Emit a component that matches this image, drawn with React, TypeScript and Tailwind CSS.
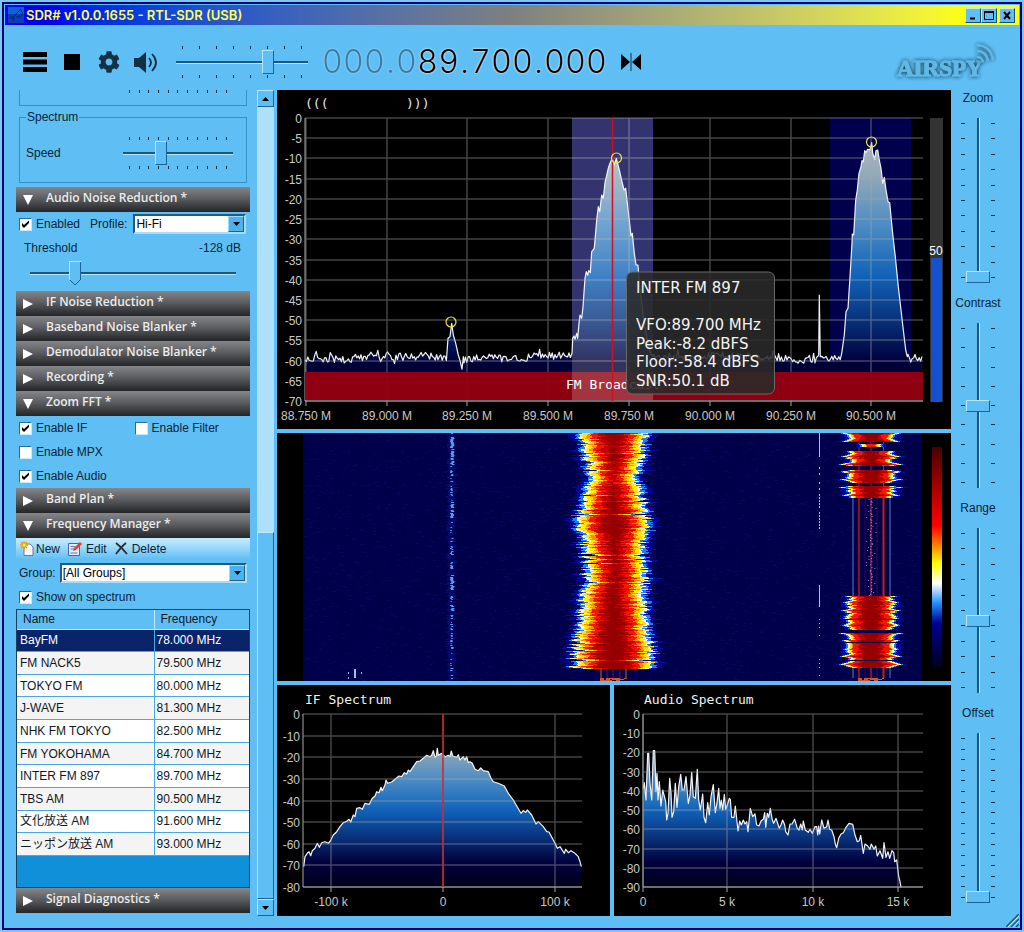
import { type ReactNode } from 'react';
import { FaCog } from 'react-icons/fa';

type Point = [number, number];

const stations = [
  { name: 'BayFM', frequency: '78.000 MHz' },
  { name: 'FM NACK5', frequency: '79.500 MHz' },
  { name: 'TOKYO FM', frequency: '80.000 MHz' },
  { name: 'J-WAVE', frequency: '81.300 MHz' },
  { name: 'NHK FM TOKYO', frequency: '82.500 MHz' },
  { name: 'FM YOKOHAMA', frequency: '84.700 MHz' },
  { name: 'INTER FM 897', frequency: '89.700 MHz' },
  { name: 'TBS AM', frequency: '90.500 MHz' },
  { name: '文化放送 AM', frequency: '91.600 MHz' },
  { name: 'ニッポン放送 AM', frequency: '93.000 MHz' },
];

// Small seeded generator so the noise is the same on every render
function createRandom(seed: number) {
  let s = seed;
  return () => {
    s = (s * 1664525 + 1013904223) % 4294967296;
    return s / 4294967296;
  };
}

// Traces are stored in thirds of a pixel
function parseTrace(data: string, dx = 0, dy = 0): Point[] {
  return data.split(' ').map(pair => {
    const [x, y] = pair.split(',').map(Number);
    return [(x + dx) / 3, (y + dy) / 3];
  });
}

function toPath(points: Point[]) {
  return 'M' + points.map(([x, y]) => `${x.toFixed(1)} ${y.toFixed(1)}`).join('L');
}

/* ---------- trace data ---------- */

const random = createRandom(897);

function noise(from: number, to: number): Point[] {
  const points: Point[] = [];
  for (let x = from; x < to; x += 1.4) {
    const drift = Math.sin(x / 26) * 1.4 + Math.sin(x / 9) * 0.8;
    const spike = random() > 0.88 ? (random() - 0.5) * 12 : 0;
    points.push([x, 267.5 + drift + (random() - 0.5) * 8 + spike]);
  }
  return points;
}

const mainTrace: Point[] = [
  ...noise(28, 170),
  ...parseTrace('519,745 525,740 530,700 535,735 542,760 550,795 556,815 561,838 565,800', -6),
  ...noise(187, 294),
  ...parseTrace(
    '891,790 893,745 897,738 900,748 905,730 908,745 912,700 915,675 920,685 924,650 930,565 934,545 938,556 941,542 946,548 950,485 958,475 965,390 970,350 974,365 980,315 985,325 990,278 1000,235 1005,220 1012,205 1018,225 1024,205',
    -6
  ),
  ...parseTrace(
    '58,240 65,272 72,300 77,295 83,350 88,390 93,437 97,430 103,490 108,525 114,525 118,575 124,630 130,680 140,740 150,785 158,800',
    969
  ),
  ...noise(377, 541),
  ...parseTrace('656,795 658,615 661,800', 969),
  ...noise(545, 564),
  ...parseTrace(
    '725,790 733,735 738,665 744,655 750,560 756,460 757,432 761,435 767,330 772,300 777,250 783,230 786,212 790,215 794,182 798,188 803,178 810,180 815,158 818,190 824,208 828,182 833,180 838,210 843,235 848,280 853,262 858,300 864,335 869,338 877,420 886,500 895,590 903,660 910,720 917,780 922,800',
    969
  ),
  ...noise(631, 646),
];

const ifTrace = parseTrace(
  '86,560 90,530 97,520 102,515 107,527 112,512 120,505 127,490 133,502 140,488 150,485 160,490 166,483 175,465 185,455 195,440 205,428 215,424 222,418 227,426 235,405 240,410 245,385 255,383 262,388 270,370 283,373 292,355 300,348 305,335 312,338 318,322 322,332 330,315 333,300 338,310 350,306 360,298 372,288 380,290 388,278 395,282 400,270 405,275 415,260 425,245 435,243 445,235 455,226 465,230 470,226 475,212 480,232 484,228 487,205 490,226 500,220 510,230 520,226 525,230 529,213 533,228 545,232 550,224 555,240 565,230 570,240 575,230 580,248 585,245 592,250 600,268 610,272 617,264 625,272 640,275 648,295 655,305 670,310 688,318 700,340 715,360 725,378 738,400 745,392 752,397 757,390 770,405 783,432 790,425 805,440 815,455 822,456 832,475 840,490 847,505 855,500 868,520 872,508 880,518 888,512 900,520 910,530 915,545 919,560',
  -6,
  -15
);

const audioTrace = parseTrace(
  '100,325 103,308 108,360 113,220 116,220 120,310 125,360 130,212 134,212 138,335 141,280 144,360 148,305 153,378 158,330 162,345 167,365 170,420 174,400 179,295 183,340 186,412 191,395 196,310 201,382 206,320 212,283 217,330 222,330 228,290 235,370 240,345 245,277 250,350 256,355 262,268 266,360 271,390 278,342 282,412 287,428 293,368 298,405 303,350 310,314 316,398 320,375 326,325 330,385 334,360 338,390 343,343 347,388 352,375 358,355 361,358 365,412 372,412 376,378 384,453 389,423 394,435 400,420 405,432 410,425 414,455 421,385 428,410 435,402 440,435 447,438 453,423 460,418 464,398 467,442 472,400 476,412 481,385 487,420 491,430 498,415 508,445 513,435 518,420 524,435 527,455 534,465 540,432 546,432 554,418 562,445 567,450 572,432 577,450 580,423 586,450 595,457 600,448 607,460 615,440 620,440 623,465 626,438 629,462 635,420 642,445 650,440 654,420 659,448 665,450 672,470 676,492 680,503 686,475 693,462 700,458 708,442 717,430 728,433 735,465 742,485 748,482 752,466 760,520 765,492 773,498 780,508 784,492 792,508 797,498 802,528 810,512 818,535 822,488 828,532 834,515 839,535 846,512 851,518 854,545 860,540 866,590 870,605 873,622',
  -12,
  -15
);

/* ---------- waterfall data ---------- */

const palette = ['#0505a0', '#1e7df0', '#f4f8e0', '#ffe800', '#ff8a00', '#f01800', '#c00000', '#960000'];

// y, left edge, right edge of the tuned signal
const envelope = [
  [0, 308, 365], [18, 311, 363], [44, 317, 356], [64, 310, 361], [74, 306, 365], [94, 303, 368],
  [101, 312, 363], [114, 311, 361], [130, 313, 363], [147, 313, 366], [157, 310, 363], [180, 308, 365],
  [197, 306, 366], [214, 301, 371], [236, 299, 373],
];

function edgesAt(y: number) {
  const i = Math.max(1, envelope.findIndex(e => e[0] >= y));
  const [y0, l0, r0] = envelope[i - 1];
  const [y1, l1, r1] = envelope[i];
  const t = (y - y0) / (y1 - y0);
  return [l0 + (l1 - l0) * t, r0 + (r1 - r0) * t];
}

function bar(x: number, y: number, w: number, h = 1) {
  return w > 0 ? `M${x.toFixed(1)} ${y}h${w.toFixed(1)}v${h}h${(-w).toFixed(1)}z` : '';
}

function buildWaterfall() {
  const rnd = createRandom(1655);
  const layers = palette.map(() => '');

  for (let y = 0; y < 236; y++) {
    const [left, right] = edgesAt(y);
    const notch = rnd() > 0.95 ? 5 + rnd() * 8 : 0;
    const jl = (rnd() - 0.5) * 8 + notch;
    const jr = (rnd() - 0.5) * 8 + notch * rnd();
    const grow = [-8 - rnd() * 7, -5 - rnd() * 3, -3, 0, 4 + rnd() * 2, 8 + rnd() * 2, 13 + rnd() * 4, 19 + rnd() * 5];
    grow.forEach((g, k) => {
      const x0 = left + jl + g + (rnd() - 0.5) * 3;
      const x1 = right - jr - g - (rnd() - 0.5) * 3;
      layers[k] += bar(x0, y, x1 - x0);
    });
  }

  // from, to, relative width of the 90.500 bursts
  const blocks = [
    [0, 9, 1], [11, 14, 0.4], [18, 33, 1], [37, 50, 1], [53, 65, 1],
    [163, 186, 1], [187, 197, 1], [200, 209, 1], [210, 227, 1], [228, 235, 1],
  ];
  blocks.forEach(([from, to, scale]) => {
    for (let y = from; y < to; y++) {
      const phase = Math.abs(((y * 0.13) % 1) - 0.5) * 2;
      const half = (20 + phase ** 3 * 8 + (rnd() - 0.5) * 5) * scale;
      const grow = [-5 - rnd() * 4, -3, -1, 1, 3, 4, 8 + rnd() * 4, 12 + rnd() * 4];
      grow.forEach((g, k) => {
        layers[k] += bar(594 - half + g, y, 2 * (half - g));
      });
    }
  });

  let dots = '';
  for (let i = 0; i < 3200; i++) {
    dots += bar(26 + rnd() * 616, Math.floor(rnd() * 248), 1 + rnd() * 3);
  }

  // weak carrier at 89.200
  let carrier = '';
  let haze = '';
  for (let y = 0; y < 248; y++) {
    const strong = (y > 3 && y < 32) || (y > 70 && y < 86) || (y > 140 && y < 161) || (y > 171 && y < 178);
    if (strong ? rnd() > 0.2 : rnd() > 0.6) {
      carrier += bar(173 + rnd() * 1.5, y, strong ? 3 : 1 + rnd() * 2);
    }
    haze += bar(169 + rnd() * 4, y, 3 + rnd() * 6);
  }

  let birdie = bar(542, 0, 1, 24) + bar(542, 152, 1, 22);
  for (let y = 34; y < 95; y += 3) {
    if (rnd() > 0.35) birdie += bar(542, y, 1, 2);
  }
  for (let y = 174; y < 246; y += 4) {
    if (rnd() > 0.6) birdie += bar(542, y, 1, 1);
  }

  let pips = '';
  for (let y = 65; y < 163; y += 3) {
    pips += bar(593 + rnd() * 2, y, 1, 1) + bar(589 + rnd() * 10, y + 1, 1, 1);
  }

  let tail = '';
  for (let y = 245; y < 248; y++) {
    for (let x = 0; x < 26; x += 2) {
      if (rnd() > 0.4) tail += bar(323 + x, y, 2) + bar(581 + x, y, 2);
    }
  }

  return { layers, dots, carrier, haze, birdie, pips, tail };
}

const waterfall = buildWaterfall();

/* ---------- controls ---------- */

const horizontalThumb =
  '[&::-webkit-slider-thumb]:appearance-none [&::-webkit-slider-thumb]:h-6 [&::-webkit-slider-thumb]:w-[12px] [&::-webkit-slider-thumb]:bg-[#5fbff5] [&::-webkit-slider-thumb]:border [&::-webkit-slider-thumb]:border-t-[#b8e6ff] [&::-webkit-slider-thumb]:border-l-[#b8e6ff] [&::-webkit-slider-thumb]:border-r-[#17659a] [&::-webkit-slider-thumb]:border-b-[#17659a]';
// body with lit left and dark right edge, then two diagonals for the tip
const pointerThumb =
  '[&::-webkit-slider-thumb]:appearance-none [&::-webkit-slider-thumb]:h-6 [&::-webkit-slider-thumb]:w-[12px] [&::-webkit-slider-thumb]:bg-[linear-gradient(to_right,#b8e6ff_1px,#5fbff5_1px_11px,#17659a_11px),linear-gradient(to_top_right,transparent_42%,#17659a_42%_56%,#5fbff5_56%),linear-gradient(to_top_left,transparent_42%,#17659a_42%_56%,#5fbff5_56%)] [&::-webkit-slider-thumb]:bg-[length:12px_18px,6px_6px,6px_6px] [&::-webkit-slider-thumb]:bg-[position:0_0,0_100%,100%_100%] [&::-webkit-slider-thumb]:bg-no-repeat [&::-webkit-slider-thumb]:border-t [&::-webkit-slider-thumb]:border-[#b8e6ff]';
const verticalThumb =
  '[&::-webkit-slider-thumb]:appearance-none [&::-webkit-slider-thumb]:w-6 [&::-webkit-slider-thumb]:h-[12px] [&::-webkit-slider-thumb]:bg-[#5fbff5] [&::-webkit-slider-thumb]:border [&::-webkit-slider-thumb]:border-t-[#b8e6ff] [&::-webkit-slider-thumb]:border-l-[#b8e6ff] [&::-webkit-slider-thumb]:border-r-[#17659a] [&::-webkit-slider-thumb]:border-b-[#17659a]';

function Ticks({ count }: { count: number }) {
  return (
    <div className="flex justify-between px-[6px]">
      {Array.from({ length: count }, (_, i) => (
        <span key={i} className="h-[3px] w-px bg-[#0c2c40]" />
      ))}
    </div>
  );
}

interface SliderProps {
  label: string;
  value: number;
  ticks?: number;
  pointer?: boolean;
  tall?: boolean;
}

function HorizontalSlider({ label, value, ticks = 0, pointer = false }: SliderProps) {
  return (
    <div className="flex flex-col gap-px">
      {ticks > 0 && <Ticks count={ticks} />}
      <input
        type="range"
        aria-label={label}
        defaultValue={value}
        className={`block h-6 w-full appearance-none bg-transparent bg-[linear-gradient(#17587f_0_2px,#b8e6ff_2px_3px)] bg-[length:100%_3px] bg-[position:0_50%] bg-no-repeat ${pointer ? pointerThumb : horizontalThumb}`}
      />
      {ticks > 0 && <Ticks count={ticks} />}
    </div>
  );
}

function VerticalTicks({ count }: { count: number }) {
  return (
    <div className="flex flex-col justify-between py-[5px]">
      {Array.from({ length: count }, (_, i) => (
        <span key={i} className="h-px w-[4px] bg-[#0c2c40]" />
      ))}
    </div>
  );
}

function VerticalSlider({ label, value, ticks = 11, tall = false }: SliderProps) {
  return (
    <label className="flex flex-col items-center gap-3">
      <span className="text-[12px] leading-4">{label}</span>
      <div className={`flex gap-px ${tall ? 'h-[170px]' : 'h-[165px]'}`}>
        <VerticalTicks count={ticks} />
        <input
          type="range"
          defaultValue={value}
          className={`h-full w-6 appearance-none bg-transparent bg-[linear-gradient(to_right,#17587f_0_2px,#b8e6ff_2px_3px)] bg-[length:3px_100%] bg-[position:50%_0] bg-no-repeat [direction:rtl] [writing-mode:vertical-lr] ${verticalThumb}`}
        />
        <VerticalTicks count={ticks} />
      </div>
    </label>
  );
}

function Checkbox({ label, checked = false }: { label: string; checked?: boolean }) {
  return (
    <label className="flex items-center gap-1">
      <span className="grid">
        <input
          type="checkbox"
          defaultChecked={checked}
          className="peer size-[13px] appearance-none border border-t-[#2c6c92] border-r-[#c4eaff] border-b-[#c4eaff] border-l-[#2c6c92] bg-white [grid-area:1/1]"
        />
        <svg
          viewBox="0 0 13 13"
          className="pointer-events-none invisible size-[13px] peer-checked:visible [grid-area:1/1]"
        >
          <path d="M3 5v3l2 2 5-5V2.500L5 7z" fill="#000" />
        </svg>
      </span>
      {label}
    </label>
  );
}

function Combo({ id, options }: { id: string; options: string[] }) {
  return (
    <div className="flex h-5 min-w-0 flex-1 border-2 border-t-[#1d5b80] border-r-[#a8dcf8] border-b-[#a8dcf8] border-l-[#1d5b80] bg-white">
      <select id={id} className="min-w-0 flex-1 appearance-none px-px text-[12px] leading-4 text-black">
        {options.map(option => (
          <option key={option}>{option}</option>
        ))}
      </select>
      <span className="flex w-4 items-center justify-center border border-t-[#9ed8fa] border-r-[#17659a] border-b-[#17659a] border-l-[#9ed8fa] bg-[#4db2ec]">
        <svg viewBox="0 0 7 4" className="w-[7px]">
          <path d="M0 0h7L3.500 4z" />
        </svg>
      </span>
    </div>
  );
}

function SectionHeader({ title, open = false }: { title: string; open?: boolean }) {
  return (
    <button
      type="button"
      aria-expanded={open}
      className="flex h-[25px] w-full shrink-0 items-center gap-3 bg-linear-to-b from-[#85878a] via-[#57595c] to-[#232527] pl-[6px] text-left font-['Open_Sans',sans-serif] text-[12px] leading-4 font-semibold text-[#ececec]"
    >
      <svg viewBox="0 0 12 12" className="size-3" fill="#fff">
        {open ? <path d="M1 1h10L6 11z" /> : <path d="M1 1l10 5-10 5z" />}
      </svg>
      <span className="pb-1">{title} *</span>
    </button>
  );
}

function ToolButton({ label, children }: { label: string; children: ReactNode }) {
  return (
    <button type="button" aria-label={label} className="flex size-6 items-center justify-center">
      {children}
    </button>
  );
}

function WindowButton({ label, children }: { label: string; children: ReactNode }) {
  return (
    <button
      type="button"
      aria-label={label}
      className="flex h-[15px] w-4 items-center justify-center border border-t-[#c4eaff] border-r-[#17506e] border-b-[#17506e] border-l-[#c4eaff] bg-[#5fbff5]"
    >
      <svg viewBox="0 0 10 9" className="h-[9px] w-[10px]" fill="none" stroke="#000">
        {children}
      </svg>
    </button>
  );
}

/* ---------- window parts ---------- */

function TitleBar() {
  return (
    <div className="flex h-5 items-center bg-linear-to-r from-[#0000f0] from-5% via-[#7f7f80] via-50% to-[#ffff00] to-95% pr-[4px] pl-[3px]">
      <svg viewBox="0 0 16 16" className="size-4">
        <rect width="16" height="16" fill="#0a3fb4" />
        <rect width="16" height="7" fill="#0d62d8" />
        <path d="M2 12c0-3 4-3 4 0s-4 1 2-5 4-5 6-2-5 8-5 4" fill="none" stroke="#06206e" />
      </svg>
      <h1 className="flex-1 pl-[2px] font-[Inter,sans-serif] text-[13px] leading-4 font-semibold text-[#ffff50]">
        SDR# v1.0.0.1655 - RTL-SDR (USB)
      </h1>
      <WindowButton label="Minimize">
        <path d="M2 7.500h5" strokeWidth="2" />
      </WindowButton>
      <WindowButton label="Maximize">
        <path d="M.5 1.500h9v7h-9z" />
        <path d="M0 1h10" strokeWidth="2" />
      </WindowButton>
      <div className="pl-[2px]">
        <WindowButton label="Close">
          <path d="M2 1l6 7M8 1L2 8" strokeWidth="2" />
        </WindowButton>
      </div>
    </div>
  );
}

function Frequency() {
  const text = '000.089.700.000';
  return (
    <div className="flex font-[Inter,sans-serif] text-[32px] leading-8 font-light text-black [text-shadow:0_0_2px_#fff,0_0_1px_#fff]">
      {text.split('').map((char, i) => (
        <span
          key={i}
          className={`text-center ${char === '.' ? 'w-[11px]' : 'w-[21px]'} ${i < 5 ? 'opacity-35' : ''}`}
        >
          {char}
        </span>
      ))}
    </div>
  );
}

function Toolbar() {
  return (
    <div className="flex h-[65px] items-center pt-[9px] pl-[18px]">
      <div className="flex gap-[13px]">
        <ToolButton label="Menu">
          <svg viewBox="0 0 24 24" className="size-6">
            <path d="M0 2h24v5H0zM0 9.500h24v5H0zM0 17h24v5H0z" />
          </svg>
        </ToolButton>
        <ToolButton label="Stop">
          <span className="size-4 bg-black" />
        </ToolButton>
        <ToolButton label="Settings">
          <FaCog className="size-[22px] text-[#143044]" />
        </ToolButton>
        <ToolButton label="Mute">
          <svg viewBox="0 0 24 24" className="size-6" fill="none" stroke="#143044" strokeWidth="1.800">
            <path d="M0 8h5l7-6v21l-7-6H0z" fill="#143044" stroke="none" />
            <path d="M15 8q4 4.500 0 9M18 4q8 8.500 0 17" />
          </svg>
        </ToolButton>
      </div>
      <div className="ml-[18px] w-[132px]">
        <HorizontalSlider label="Volume" value={72} ticks={8} />
      </div>
      <div className="ml-[14px]">
        <Frequency />
      </div>
      <div className="ml-3">
        <ToolButton label="Center tuning">
          <svg viewBox="0 0 20 18" className="w-5">
            <path d="M0 1l9 8-9 8zM20 1l-9 8 9 8z" />
            <path d="M10 0v18" stroke="#143044" />
          </svg>
        </ToolButton>
      </div>
      <svg viewBox="0 0 110 46" className="mr-5 ml-auto w-[110px] shrink-0 self-center">
        <defs>
          <filter id="glow" x="-20%" y="-40%" width="140%" height="180%">
            <feDropShadow dx="0" dy="0" stdDeviation="2" floodColor="#04202f" floodOpacity="1" />
          </filter>
        </defs>
        <g filter="url(#glow)">
          <text
            x="8"
            y="37"
            fill="#62b8e6"
            stroke="#62b8e6"
            fontFamily="Liberation Serif, serif"
            fontWeight="700"
            fontSize="23"
          >
            AIRSPY
          </text>
        </g>
        <g filter="url(#glow)" fill="none" stroke="#62b8e6" strokeWidth="2">
          <path d="M88 18q5 0 6 5M88 12q9 0 11 10M88 6q14 1 16 15" />
        </g>
      </svg>
    </div>
  );
}

function Scrollbar() {
  const button =
    'flex h-[17px] items-center justify-center border border-t-[#b8e6ff] border-r-[#17659a] border-b-[#17659a] border-l-[#b8e6ff] bg-[#5fbff5]';
  return (
    <div className="flex w-[17px] flex-col bg-[#ade0fa]">
      <button type="button" aria-label="Scroll up" className={button}>
        <svg viewBox="0 0 7 4" className="w-[7px]">
          <path d="M0 4h7L3.500 0z" />
        </svg>
      </button>
      <div className="flex-[426]" />
      <div className="flex-[366] border border-t-[#c4eaff] border-r-[#17659a] border-b-[#17659a] border-l-[#b8e6ff] bg-[#5fbff5]" />
      <button type="button" aria-label="Scroll down" className={button}>
        <svg viewBox="0 0 7 4" className="w-[7px]">
          <path d="M0 0h7L3.500 4z" />
        </svg>
      </button>
    </div>
  );
}

function FrequencyManager() {
  return (
    <>
      <div className="flex h-[21px] items-center gap-2 bg-linear-to-b from-[#c8ecff] to-[#5fbff5] pl-1">
        <button type="button" className="flex items-center gap-[2px]">
          <svg viewBox="0 0 14 15" className="w-[14px]">
            <path d="M4 3h6l3 3v8.500H4z" fill="#f4f8fc" stroke="#6a7c90" />
            <path d="M4 0v8M0 4h8M1 1l6 6M7 1L1 7" stroke="#e8a200" strokeWidth="1.500" />
            <circle cx="4" cy="4" r="1.500" fill="#fff27a" />
          </svg>
          New
        </button>
        <button type="button" className="flex items-center gap-1">
          <svg viewBox="0 0 14 15" className="w-[14px]">
            <path d="M.5 2.500h11v12H.5z" fill="#e4eefc" stroke="#4466b4" />
            <path d="M2.500 5.500h5M2.500 8h4M2.500 12h7" stroke="#5c7cc8" />
            <path d="M5 10l1-3 6-6 2 2-6 6z" fill="#e04430" />
          </svg>
          Edit
        </button>
        <button type="button" className="flex items-center gap-1">
          <svg viewBox="0 0 13 13" className="w-[13px]" fill="none" stroke="#2a2a32" strokeWidth="1.800">
            <path d="M1 1c4 3 7 6 11 11M11 1C7 4 4 8 1 12" />
          </svg>
          Delete
        </button>
      </div>
      <div className="mt-1 flex items-center gap-1 pr-[3px] pl-[3px]">
        <label htmlFor="group">Group:</label>
        <Combo id="group" options={['[All Groups]']} />
      </div>
      <div className="mt-[3px] mb-px flex h-[22px] items-center pl-[3px]">
        <Checkbox label="Show on spectrum" checked />
      </div>
      <div className="h-[279px] shrink-0 border border-[#14405c] bg-[#1090d8]">
        <table className="h-[246px] w-full table-fixed border-collapse text-left text-[#10181e]">
          <colgroup>
            <col className="w-[137px]" />
            <col />
          </colgroup>
          <thead>
            <tr className="h-[19px] bg-[#5fbff5]">
              <th className="border-r border-b border-[#c4eaff] px-[6px] font-normal">Name</th>
              <th className="border-b border-[#c4eaff] px-[6px] font-normal">Frequency</th>
            </tr>
          </thead>
          <tbody>
            {stations.map((station, index) => (
              <tr
                key={station.name}
                className={index === 0 ? 'bg-[#0a246a] text-white' : index % 2 ? 'bg-[#f4f4f4]' : 'bg-white'}
              >
                <td className="border-r border-b border-[#48a8e0] px-[3px] whitespace-nowrap">{station.name}</td>
                <td className="border-b border-[#48a8e0] px-[2px] whitespace-nowrap">{station.frequency}</td>
              </tr>
            ))}
          </tbody>
        </table>
      </div>
    </>
  );
}

function Sidebar() {
  return (
    <aside className="flex w-[234px] shrink-0 flex-col text-[12px] leading-4">
      <div className="mr-[3px] ml-[3px] flex h-4 shrink-0 justify-end border border-t-0 border-[#3291c8] pr-[13px]">
        <div className="w-[110px]">
          <Ticks count={11} />
        </div>
      </div>
      <fieldset className="mx-[3px] mt-[5px] h-[72px] shrink-0 border border-[#3291c8] px-[6px]">
        <legend className="px-px leading-3">Spectrum</legend>
        <div className="flex items-center justify-between pt-[14px] pr-[7px]">
          <span>Speed</span>
          <div className="w-[110px]">
            <HorizontalSlider label="Speed" value={33} ticks={11} />
          </div>
        </div>
      </fieldset>

      <div className="mt-[4px]">
        <SectionHeader title="Audio Noise Reduction" open />
      </div>
      <div className="mt-[2px] flex items-center pr-1 pl-[3px]">
        <Checkbox label="Enabled" checked />
        <label htmlFor="profile" className="mr-[6px] ml-[10px]">
          Profile:
        </label>
        <Combo id="profile" options={['Hi-Fi']} />
      </div>
      <div className="mt-[6px] flex justify-between pr-[9px] pl-2">
        <span>Threshold</span>
        <output>-128 dB</output>
      </div>
      <div className="mt-[5px] mb-[6px] px-[14px]">
        <HorizontalSlider label="Threshold" value={20} pointer />
      </div>

      <SectionHeader title="IF Noise Reduction" />
      <SectionHeader title="Baseband Noise Blanker" />
      <SectionHeader title="Demodulator Noise Blanker" />
      <SectionHeader title="Recording" />
      <SectionHeader title="Zoom FFT" open />
      <div className="grid h-[72px] shrink-0 grid-cols-2 items-center pl-[3px]">
        <Checkbox label="Enable IF" checked />
        <Checkbox label="Enable Filter" />
        <div className="col-span-2">
          <Checkbox label="Enable MPX" />
        </div>
        <div className="col-span-2">
          <Checkbox label="Enable Audio" checked />
        </div>
      </div>
      <SectionHeader title="Band Plan" />
      <SectionHeader title="Frequency Manager" open />
      <FrequencyManager />
      <SectionHeader title="Signal Diagnostics" />
    </aside>
  );
}

/* ---------- charts ---------- */

interface PlotProps {
  left: number;
  right: number;
  top: number;
  bottom: number;
  xs: number[];
  xLabels: string[];
  yLabels: string[];
}

function Grid({ left, right, top, bottom, xs, xLabels, yLabels }: PlotProps) {
  const step = (bottom - top) / (yLabels.length - 1);
  const ys = yLabels.map((_, i) => Math.round(top + i * step));
  return (
    <g fontFamily="Liberation Sans, sans-serif" fontSize="12" fill="#c8c8c8">
      <path
        d={ys.map(y => `M${left} ${y}H${right}`).join('') + xs.map(x => `M${x} ${top}V${bottom}`).join('')}
        stroke="#a8a8a8"
        strokeOpacity="0.4"
        strokeWidth="1.500"
      />
      <path
        d={`M${left} ${top}V${bottom}H${right}` + xs.map(x => `M${x} ${bottom}v5`).join('')}
        fill="none"
        stroke="#a8a8a8"
      />
      {yLabels.map((label, i) => (
        <text key={label} x={left - 3} y={ys[i] + 5} textAnchor="end">
          {label}
        </text>
      ))}
      {xLabels.map((label, i) => (
        <text key={label} x={xs[i]} y={bottom + 19} textAnchor="middle">
          {label}
        </text>
      ))}
    </g>
  );
}

function Trace({ id, points, top, bottom }: { id: string; points: Point[]; top: number; bottom: number }) {
  const line = toPath(points);
  return (
    <>
      <defs>
        <linearGradient id={id} gradientUnits="userSpaceOnUse" x1="0" y1={top} x2="0" y2={bottom}>
          <stop offset="0" stopColor="#c4c4c4" />
          <stop offset="0.2" stopColor="#93a9b8" />
          <stop offset="0.38" stopColor="#4c8cc4" />
          <stop offset="0.56" stopColor="#1062b8" />
          <stop offset="0.7" stopColor="#0a3680" />
          <stop offset="0.86" stopColor="#00003c" />
          <stop offset="1" stopColor="#00001c" />
        </linearGradient>
      </defs>
      <path d={`${line}V${bottom}H${points[0][0]}z`} fill={`url(#${id})`} />
      <path d={line} fill="none" stroke="#f0f4fa" strokeWidth="1.200" strokeLinejoin="round" />
    </>
  );
}

function SpectrumPanel() {
  const info = ['VFO:89.700 MHz', 'Peak:-8.2 dBFS', 'Floor:-58.4 dBFS', 'SNR:50.1 dB'];
  return (
    <svg viewBox="0 0 674 339" className="block w-full bg-black">
      <g fill="#e8e8e8" fontFamily="DejaVu Sans Mono, monospace" fontSize="13">
        <text x="28" y="18">(((</text>
        <text x="129" y="18">)))</text>
      </g>
      <rect x="295" y="28" width="81" height="283" fill="#00004d" />
      <rect x="553" y="28" width="81" height="283" fill="#00004d" />
      <Trace id="rf" points={mainTrace} top={28} bottom={311} />
      <Grid
        left={28}
        right={646}
        top={28}
        bottom={311}
        xs={[29, 110, 190, 271, 352, 433, 514, 594]}
        xLabels={['88.750 M', '89.000 M', '89.250 M', '89.500 M', '89.750 M', '90.000 M', '90.250 M', '90.500 M']}
        yLabels={['0', '-5', '-10', '-15', '-20', '-25', '-30', '-35', '-40', '-45', '-50', '-55', '-60', '-65', '-70']}
      />
      <rect x="28" y="282" width="618" height="28" fill="#960010" fillOpacity="0.95" />
      <text x="336" y="299" textAnchor="middle" fill="#fff" fontFamily="DejaVu Sans Mono, monospace" fontSize="13">
        FM Broadcast
      </text>
      <rect x="295" y="28" width="81" height="282" fill="#fff" fillOpacity="0.2" />
      <path d="M335.500 28V311" stroke="#d01020" strokeWidth="1.500" />
      <g fill="none" stroke="#e6e640" strokeWidth="1.200">
        <circle cx="174" cy="232" r="5" />
        <circle cx="339.500" cy="68" r="5" />
        <circle cx="594.500" cy="52" r="5" />
      </g>

      {/* signal strength */}
      <rect x="653" y="28" width="13" height="284" fill="#333" />
      <rect x="654" y="168" width="11" height="144" fill="#1450d0" />
      <text x="659" y="165" textAnchor="middle" fill="#fff" fontFamily="Liberation Sans, sans-serif" fontSize="12">
        50
      </text>

      {/* station tooltip */}
      <rect x="349.500" y="182" width="148" height="122" rx="6" fill="#2a2a2a" fillOpacity="0.88" stroke="#6a6a6a" />
      <g fill="#f4f4f4" fontFamily="DejaVu Sans, sans-serif" fontSize="15">
        <text x="359" y="203">INTER FM 897</text>
        {info.map((line, i) => (
          <text key={line} x="359" y={240 + Math.round(i * 18.5)}>
            {line}
          </text>
        ))}
      </g>
    </svg>
  );
}

function WaterfallPanel() {
  const lines = [
    { x: 576, color: '#4f80c8', width: 1 },
    { x: 582, color: '#c01818', width: 1.4 },
    { x: 588, color: '#2a0a50', width: 1 },
    { x: 594, color: '#b01848', width: 1.4 },
    { x: 600, color: '#3c0a40', width: 1 },
    { x: 606.5, color: '#c82010', width: 2 },
    { x: 613, color: '#4f80c8', width: 1 },
  ];
  return (
    <svg viewBox="0 0 674 248" className="block w-full bg-black">
      <defs>
        <linearGradient id="scale" x1="0" y1="0" x2="0" y2="1">
          <stop offset="0" stopColor="#4a0000" />
          <stop offset="0.2" stopColor="#b00000" />
          <stop offset="0.36" stopColor="#ff0000" />
          <stop offset="0.53" stopColor="#ffff00" />
          <stop offset="0.62" stopColor="#ffffff" />
          <stop offset="0.71" stopColor="#1e90ff" />
          <stop offset="0.8" stopColor="#000091" />
          <stop offset="1" stopColor="#000020" />
        </linearGradient>
      </defs>
      <rect x="26" width="619" height="248" fill="#00004a" />
      <path d={waterfall.dots} fill="#0c0c6c" fillOpacity="0.45" />
      <path d={waterfall.haze} fill="#0a1488" fillOpacity="0.6" />
      <path d={waterfall.carrier} fill="#5a9cf0" />
      <path d={waterfall.birdie} fill="#9cc4f0" />
      <path d="M71 239h1v2h-1zM71 244h1v2h-1zM77 236h2v9h-2zM84 239h1v2h-1z" fill="#a0b8f0" />
      {lines.map(line => (
        <path key={line.x} d={`M${line.x} 65V163M${line.x} 235V245`} stroke={line.color} strokeWidth={line.width} />
      ))}
      <path d="M582 8V66M606.500 8V66M594 8V66" stroke="#c02010" />
      <path d="M324 236v10M349 236v10" stroke="#e06010" />
      <path d="M330 236v10M336 236v10M343 236v10" stroke="#801030" />
      <path d={waterfall.pips} fill="#8090e0" />
      <g shapeRendering="crispEdges">
        {waterfall.layers.map((d, i) => (
          <path key={palette[i]} d={d} fill={palette[i]} />
        ))}
      </g>
      <path d={waterfall.tail} fill="#e05020" />
      <rect x="655" y="14" width="10" height="220" fill="url(#scale)" />
    </svg>
  );
}

function IfPanel() {
  return (
    <svg viewBox="0 0 333 231" className="block w-full bg-black">
      <text x="28" y="19" fill="#f0f0f0" fontFamily="DejaVu Sans Mono, monospace" fontSize="13">
        IF Spectrum
      </text>
      <Trace id="if" points={ifTrace} top={29} bottom={202} />
      <Grid
        left={26}
        right={305}
        top={29}
        bottom={202}
        xs={[54, 166, 278]}
        xLabels={['-100 k', '0', '100 k']}
        yLabels={['0', '-10', '-20', '-30', '-40', '-50', '-60', '-70', '-80']}
      />
      <path d="M166 29V202" stroke="#d02028" strokeWidth="1.500" />
    </svg>
  );
}

function AudioPanel() {
  return (
    <svg viewBox="0 0 337 231" className="block w-full bg-black">
      <text x="30" y="19" fill="#f0f0f0" fontFamily="DejaVu Sans Mono, monospace" fontSize="13">
        Audio Spectrum
      </text>
      <Trace id="audio" points={audioTrace} top={29} bottom={202} />
      <Grid
        left={29}
        right={309}
        top={29}
        bottom={202}
        xs={[29, 113, 199, 284]}
        xLabels={['0', '5 k', '10 k', '15 k']}
        yLabels={['0', '-10', '-20', '-30', '-40', '-50', '-60', '-70', '-80', '-90']}
      />
    </svg>
  );
}

export default function App() {
  return (
    <div className="min-h-screen bg-[#7cc8f0] p-[2px] font-['Liberation_Sans','Noto_Sans_CJK_JP',sans-serif] text-[#0a2434]">
      <div className="relative border-2 border-[#00007c] bg-[#5fbff5] p-px">
        <TitleBar />
        <Toolbar />
        <main className="flex pb-[11px] pl-[11px]">
          <Sidebar />
          <div className="ml-[7px] flex">
            <Scrollbar />
          </div>
          <div className="ml-[3px] flex min-w-0 flex-1 flex-col gap-1">
            <SpectrumPanel />
            <WaterfallPanel />
            <div className="grid grid-cols-[333fr_337fr] gap-1">
              <IfPanel />
              <AudioPanel />
            </div>
          </div>
          <div className="flex w-[68px] shrink-0 flex-col gap-3 pr-[14px]">
            <VerticalSlider label="Zoom" value={0} ticks={11} />
            <VerticalSlider label="Contrast" value={50} ticks={9} />
            <VerticalSlider label="Range" value={43} ticks={11} />
            <VerticalSlider label="Offset" value={0} ticks={16} tall />
          </div>
        </main>
        {/* resize grip */}
        <svg viewBox="0 0 13 13" className="absolute right-px bottom-px size-[13px]" fill="none">
          <path d="M0 13L13 0M5 13l8-8M10 13l3-3" stroke="#17587f" strokeWidth="1.500" />
          <path d="M2 13L13 2M7 13l6-6" stroke="#b8e6ff" />
        </svg>
      </div>
    </div>
  );
}
